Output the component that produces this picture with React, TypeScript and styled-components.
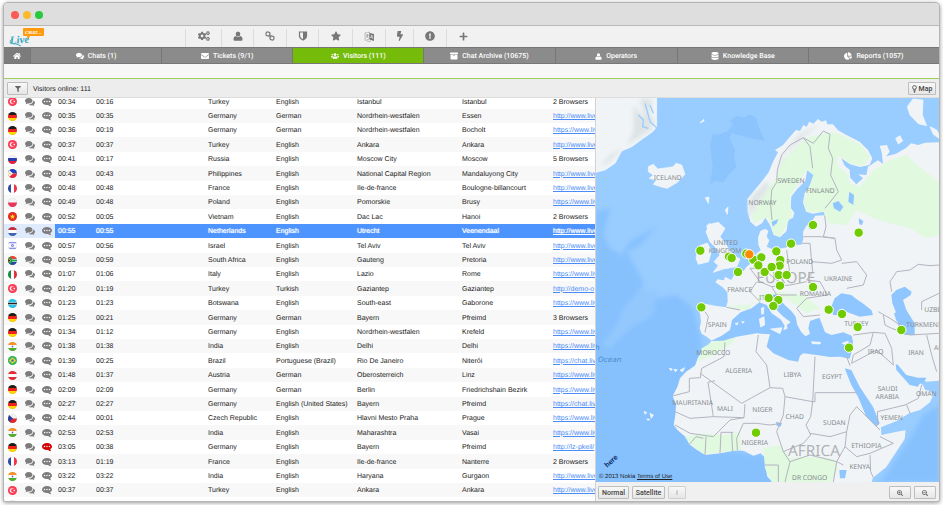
import React from "react";
import styled, { createGlobalStyle, css } from "styled-components";
import {
  FaArchive,
  FaBolt,
  FaChartPie,
  FaCogs,
  FaDatabase,
  FaEnvelope,
  FaExclamationCircle,
  FaFilter,
  FaHome,
  FaPlus,
  FaSearchMinus,
  FaSearchPlus,
  FaStar,
  FaUsers,
} from "react-icons/fa";

const GlobalStyle = createGlobalStyle`
  * { box-sizing: border-box; }
  body {
    margin: 0;
    background: #fff;
    color: #222;
    font: 7px/14px "Liberation Sans", Arial, sans-serif;
    text-rendering: geometricPrecision;
  }
  svg { display: block; flex: none; }
`;

/* ---------- window ---------- */

const Screen = styled.div`
  height: 100vh;
  padding: 3px 4px 4px;
  overflow: hidden;
`;

const Window = styled.div`
  height: 100%;
  display: flex;
  flex-direction: column;
  overflow: hidden;
  background: #f0f0f0;
  border-radius: 4px 4px 2px 2px;
  box-shadow: 0 0 0 1px #b4b4b4, 0 1px 4px 1px rgba(0, 0, 0, 0.4);
`;

const TitleBar = styled.header`
  flex: none;
  display: flex;
  align-items: center;
  gap: 4px;
  height: 23px;
  padding: 2px 7px 0;
  background: #dedede;
  border-bottom: 1px solid #b8b8b8;
`;

const WindowButton = styled.button<{ $color: string }>`
  width: 8px;
  height: 8px;
  padding: 0;
  border: 0;
  border-radius: 50%;
  background: ${(p) => p.$color};
`;

const Toolbar = styled.div`
  flex: none;
  display: flex;
  height: 21px;
  background: #f1f1f1;
`;

const LogoBox = styled.div`
  width: 181px;
  padding-left: 5px;
`;

const Tool = styled.button<{ $width: number }>`
  display: flex;
  align-items: center;
  justify-content: center;
  width: ${(p) => p.$width}px;
  height: 18px;
  margin-top: 3px;
  padding: 0 0 4px;
  border: 0;
  border-left: 1px solid #dcdcdc;
  background: none;
  color: #777;
  font-size: 10px;
`;

const Tabs = styled.nav`
  flex: none;
  display: flex;
  height: 17px;
  background: #8b8b8b;
  border-top: 1px solid #777;
  border-bottom: 1px solid #777;
`;

const Tab = styled.a<{ $grow?: number; $active?: boolean; $home?: boolean }>`
  flex: ${(p) => p.$grow ?? 131} 1 0;
  display: flex;
  align-items: center;
  justify-content: center;
  gap: 4px;
  padding-top: 1px;
  border-right: 1px solid #777;
  background: ${(p) => (p.$active ? "#74bc09" : "#8b8b8b")};
  color: #fff;
  font: 500 7px/14px Roboto, sans-serif;
  text-decoration: none;
  white-space: nowrap;
  svg {
    font-size: 8px;
  }
  &:last-child {
    border-right: 0;
  }
  ${(p) =>
    p.$home &&
    css`
      flex: 0 0 27px;
      background: #7c7c7c;
    `}
`;

const SubBar = styled.div`
  flex: none;
  height: 15px;
  background: #f7f7f7;
  border-bottom: 1px solid #9bd15a;
`;

const FilterBar = styled.div`
  flex: none;
  display: flex;
  align-items: center;
  gap: 5px;
  height: 19px;
  padding: 1px 3px 0;
  background: #ededed;
  border-bottom: 1px solid #dcdcdc;
`;

const Count = styled.span`
  flex: 1;
  padding-top: 2px;
`;

const Button = styled.button<{ $width?: number }>`
  display: flex;
  align-items: center;
  justify-content: center;
  gap: 2px;
  ${(p) => p.$width && `width: ${p.$width}px;`}
  height: 13px;
  padding: 1px 2px 0;
  border: 1px solid #bdbdbd;
  border-radius: 1px;
  background: linear-gradient(#f8f8f8, #e6e6e6);
  color: #444;
  font: 500 7px/10px Roboto, sans-serif;
  white-space: nowrap;
  &:disabled {
    border-color: #d0d0d0;
    color: #aaa;
  }
`;

/* ---------- visitor list ---------- */

const Body = styled.main`
  flex: 1;
  min-height: 0;
  display: grid;
  grid-template-columns: minmax(0, 592fr) minmax(0, 343fr);
`;

const ListPane = styled.section`
  overflow: hidden;
  background: #fff;
  border-right: 1px solid #d2d2d2;
`;

const Table = styled.table`
  width: 100%;
  margin-top: -4px;
  table-layout: fixed;
  border-collapse: collapse;
`;

const Col = styled.col<{ $width?: number }>`
  ${(p) => p.$width && `width: ${p.$width}px;`}
`;

const Cell = styled.td`
  padding: 1px 0 0 3px;
  overflow: hidden;
  white-space: nowrap;
  line-height: 13px;
`;

const IconCell = styled.td<{ $alert?: boolean }>`
  padding: 0 0 0 4px;
  color: ${(p) => (p.$alert ? "#d40000" : "#7d7d7d")};
  line-height: 0;
`;

const PageLink = styled.a`
  color: #4a8df8;
  text-decoration: underline;
`;

const Row = styled.tr<{ $selected?: boolean }>`
  height: 14px;
  &:nth-child(5n + 1),
  &:nth-child(5n + 4) {
    height: 15px;
  }
  &:nth-child(even) {
    background: #f8f8f8;
  }
  ${(p) =>
    p.$selected &&
    css`
      ${IconCell} {
        background: #dfeafc;
      }
      ${Cell} {
        background: #4d94ff;
        color: #fff;
        text-shadow: 0 0 1px #fff;
      }
      ${PageLink} {
        color: #fff;
      }
    `}
`;

/* ---------- map ---------- */

const MapPane = styled.section`
  display: flex;
  flex-direction: column;
  min-height: 0;
`;

const MapArea = styled.div`
  position: relative;
  flex: 1;
  min-height: 0;
  overflow: hidden;
  svg {
    width: 100%;
    height: 100%;
  }
`;

const Copyright = styled.small`
  position: absolute;
  left: 3px;
  bottom: 0;
  color: #222;
  font-size: 6px;
  line-height: 10px;
  a {
    color: inherit;
  }
`;

const MapBar = styled.footer`
  flex: none;
  display: flex;
  align-items: center;
  gap: 3px;
  height: 19px;
  padding: 1px 3px 0 2px;
  background: #f0f0f0;
`;

const Spacer = styled.span`
  flex: 1;
`;

/* ---------- drawings ---------- */

const Logo = () => (
  <svg width="38" height="21" viewBox="0 0 38 21" role="img" aria-label="Live Chat">
    <text x="1" y="18" fill="#3fa9bd" fontFamily="Liberation Serif, serif" fontStyle="italic" fontWeight="700" fontSize="11" transform="rotate(-4 1 18)">
      Live
    </text>
    <path d="M3 13c-3 2-2 5 0 4M4 18c3-1 5 1 8 2" fill="none" stroke="#3fa9bd" />
    <path d="M15 2h19a1 1 0 0 1 1 1v6a1 1 0 0 1-1 1H21l-2 3-1-3h-3a1 1 0 0 1-1-1V3a1 1 0 0 1 1-1z" fill="#ff9a0f" />
    <text x="16" y="8" fill="#fff" fontFamily="DejaVu Serif, serif" fontWeight="700" fontSize="4">
      CHAT...
    </text>
  </svg>
);

const UserIcon = ({ size = 10 }: { size?: number }) => (
  <svg width={size} height={size} viewBox="0 0 20 20" fill="currentColor">
    <ellipse cx="10" cy="6" rx="4.600" ry="5" />
    <path d="M5.500 10c2.500 2.600 6.500 2.600 9 0 3 .6 4.500 3 4.500 6.500 0 2-1 3-3 3H4c-2 0-3-1-3-3C1 13 2.500 10.600 5.500 10z" />
  </svg>
);

const ChatsIcon = ({ size = 10 }: { size?: number }) => (
  <svg width={size} height={size} viewBox="0 0 20 20" fill="currentColor">
    <path d="M7.500 2C11.600 2 15 4.500 15 7.500S11.600 13 7.500 13c-.8 0-1.500-.1-2.200-.2C4 13.800 2.500 14.400.8 14.600c.9-.8 1.500-1.700 1.700-2.900C1 10.600 0 9.200 0 7.500 0 4.500 3.400 2 7.500 2z" />
    <path d="M16.500 7C18.600 8 20 9.600 20 11.500c0 1.600-1 3-2.500 4 .2 1.200.8 2 1.700 2.900-1.700-.2-3.200-.8-4.500-1.800-2.800.6-5.700 0-7.500-1.600C12.500 15 16.800 11.800 16.500 7z" />
  </svg>
);

const BubbleIcon = () => (
  <svg width="10" height="10" viewBox="0 0 20 20">
    <path d="M10 2c5.500 0 10 3.100 10 7 0 2.200-1.300 4-3.500 5.300.2 1.500.7 2.800 2 4.200-2.500-.3-4.600-1.200-6.200-2.700C5.800 16.800 0 13.700 0 9c0-3.900 4.500-7 10-7z" fill="currentColor" />
    <g fill="#fff">
      <circle cx="5.200" cy="9" r="1.400" />
      <circle cx="10" cy="9" r="1.400" />
      <circle cx="14.800" cy="9" r="1.400" />
    </g>
  </svg>
);

const LinkIcon = () => (
  <svg width="10" height="10" viewBox="0 0 20 20" fill="none" stroke="currentColor" strokeWidth="2.4">
    <rect x="2" y="2" width="8" height="8" rx="3.4" transform="rotate(8 6 6)" />
    <rect x="10" y="10" width="8" height="8" rx="3.4" transform="rotate(8 14 14)" />
    <path d="M7.5 7.5l5 5" />
  </svg>
);

const ShieldIcon = () => (
  <svg width="10" height="10" viewBox="0 0 20 20">
    <path d="M3 2h14v8c0 4-4 6.500-7 8-3-1.500-7-4-7-8z" fill="none" stroke="currentColor" strokeWidth="2.400" />
    <path d="M10 2h7v8c0 4-4 6.500-7 8z" fill="currentColor" />
  </svg>
);

const TranslateIcon = () => (
  <svg width="11" height="11" viewBox="0 0 22 22">
    <path d="M2 4l9-2v14l-9 3z" fill="none" stroke="currentColor" strokeWidth="1.200" strokeDasharray="2 1" />
    <path d="M4 8h5M6.500 6v2M8 8c-.5 3-2 4.500-4 5.500M5 9.500c1 2 2 3 4 3.500" fill="none" stroke="currentColor" strokeWidth="1.100" />
    <path d="M11 4l9 2v14l-9-3z" fill="currentColor" />
    <path d="M13 14l2.500-6 2.500 7.500M14 12.500l3 .7" fill="none" stroke="#f1f1f1" strokeWidth="1.300" />
    <path d="M6 20c3 1.500 6 1 8-.5" fill="none" stroke="currentColor" />
  </svg>
);

const PinIcon = () => (
  <svg width="5" height="8" viewBox="0 0 10 16" fill="none" stroke="currentColor" strokeWidth="1.600">
    <circle cx="5" cy="5" r="3.800" />
    <path d="M3.500 9L5 15l1.500-6" />
  </svg>
);

type FlagCode =
  | "tr" | "de" | "ru" | "ph" | "fr" | "pl" | "vn" | "nl"
  | "il" | "za" | "it" | "bw" | "in" | "br" | "at" | "cz";

const Bands = ({ colors, vertical }: { colors: string[]; vertical?: boolean }) => (
  <>
    {colors.map((c, i) => {
      const size = 18 / colors.length;
      return vertical ? (
        <rect key={i} x={i * size} width={size} height="18" fill={c} />
      ) : (
        <rect key={i} y={i * size} width="18" height={size} fill={c} />
      );
    })}
  </>
);

const flagArt: Record<FlagCode, React.ReactNode> = {
  tr: (
    <>
      <rect width="18" height="18" fill="#ff3d55" />
      <circle cx="8" cy="9" r="4.500" fill="#fff" />
      <circle cx="9.500" cy="9" r="3.300" fill="#ff3d55" />
      <circle cx="12.500" cy="9" r="1.600" fill="#fff" />
    </>
  ),
  de: <Bands colors={["#1c1c1c", "#f0221c", "#ffd400"]} />,
  ru: <Bands colors={["#f4f4f4", "#2b3cae", "#e3243b"]} />,
  ph: (
    <>
      <Bands colors={["#1c3fc0", "#ea2339"]} />
      <path d="M0 0l10 9-10 9z" fill="#fff" />
      <circle cx="4" cy="9" r="2" fill="#ffce2e" />
    </>
  ),
  fr: <Bands vertical colors={["#2b4ba8", "#fff", "#f1364a"]} />,
  pl: <Bands colors={["#f4f4f4", "#e8365a"]} />,
  vn: (
    <>
      <rect width="18" height="18" fill="#ea2c20" />
      <path d="M9 4l1.500 3.500H14L11.200 10l1 3.800L9 11.600l-3.200 2.200 1-3.800L4 7.500h3.500z" fill="#ffe21f" />
    </>
  ),
  nl: <Bands colors={["#c8323f", "#fff", "#3e66b4"]} />,
  il: (
    <>
      <rect width="18" height="18" fill="#fff" />
      <path d="M0 3.500h18M0 14.500h18" stroke="#6a72e8" strokeWidth="2" />
      <path d="M9 6l2.600 4.500H6.400zM9 12L6.400 7.500h5.200z" fill="none" stroke="#6a72e8" />
    </>
  ),
  za: (
    <>
      <Bands colors={["#f04432", "#fff", "#2746a8"]} />
      <path d="M0 0l8 9-8 9M8 9h10" fill="none" stroke="#1da455" strokeWidth="4" />
      <path d="M0 4l5 5-5 5z" fill="#222" stroke="#ffc423" />
    </>
  ),
  it: <Bands vertical colors={["#1f8a46", "#fff", "#e2323b"]} />,
  bw: (
    <>
      <rect width="18" height="18" fill="#28c4f0" />
      <path d="M0 9h18" stroke="#fff" strokeWidth="5" />
      <path d="M0 9h18" stroke="#222" strokeWidth="3" />
    </>
  ),
  in: (
    <>
      <Bands colors={["#fd9226", "#fff", "#4fae2c"]} />
      <circle cx="9" cy="9" r="1.800" fill="#5a6fc0" />
    </>
  ),
  br: (
    <>
      <rect width="18" height="18" fill="#34b85a" />
      <path d="M9 3l7 6-7 6-7-6z" fill="#f8dc32" />
      <circle cx="9" cy="9" r="2.600" fill="#3f6cc0" />
    </>
  ),
  at: <Bands colors={["#e62c34", "#fff", "#e62c34"]} />,
  cz: (
    <>
      <Bands colors={["#f4f4f4", "#e1282f"]} />
      <path d="M0 0l10 9-10 9z" fill="#2c3f9c" />
    </>
  ),
};

const Flag = ({ code }: { code: FlagCode }) => (
  <svg width="9" height="9" viewBox="0 0 18 18" role="img" aria-label={code}>
    <clipPath id={`flag-${code}`}>
      <circle cx="9" cy="9" r="9" />
    </clipPath>
    <g clipPath={`url(#flag-${code})`}>{flagArt[code]}</g>
    <circle cx="9" cy="9" r="8.500" fill="none" stroke="#000" strokeOpacity=".12" />
  </svg>
);

/* ---------- map drawing ---------- */

const SEA = "#99ccff";
const LAND = "#f0f4f6";

const continent =
  "M365 737L350 725 335 716 329 700 333 680 330 655 322 640 326 627 345 626 375 632 408 637 413 620 412 592 398 577 376 562 383 553 402 556 405 545 424 555 432 540 455 535 470 515 488 500 500 475 512 466 505 450 504 428 511 408 526 401 535 408 530 425 538 436 530 455 548 463 570 461 590 457 612 449 634 449 640 432 639 410 652 388 658 403 672 404 674 393 668 376 676 362 704 361 722 349 700 350 669 356 648 350 639 322 644 295 664 265 679 240 672 228 651 227 646 258 621 283 604 305 602 338 613 353 609 368 594 376 590 408 570 427 551 420 540 390 526 368 516 385 498 395 481 380 473 350 472 312 494 285 518 256 536 232 549 200 564 172 555 165 579 150 596 130 618 105 630 108 640 90 650 95 658 80 670 86 684 72 695 80 708 76 712 88 729 88 744 106 765 118 809 140 834 165 847 190 839 210 810 216 780 208 754 190 764 212 779 224 781 248 799 268 819 250 805 238 829 240 834 215 864 196 879 207 875 172 869 152 891 150 899 170 889 184 918 176 949 158 963 145 985 150 1005 143 1047 142V857L1008 860 997 847 985 860 999 870 1005 884 1020 888 1030 900 1020 922 990 945 958 955 920 978 873 997 874 1020 920 1010 947 1006 944 1032 918 1072 889 1116 849 1148 845 1161H548L532 1145 525 1110 528 1090 512 1075 490 1082 462 1068 440 1065 392 1075 345 1080 318 1063 298 1048 286 1025 263 1006 251 990 256 960 258 930 248 903 262 876 270 850 288 830 315 812 325 785 345 762Z";

const mediterranean =
  "M362 738L395 722 420 705 426 675 452 652 485 640 508 622 530 630 545 655 573 674 584 692 580 706 592 701 591 689 602 682 577 662 555 640 545 613 541 600 560 598 582 628 606 650 617 665 622 690 634 712 647 724 660 716 655 700 660 678 688 668 697 690 705 712 725 720 760 712 785 722 789 740 785 770 779 791 750 785 720 786 680 780 640 775 630 782 624 800 595 795 550 775 530 755 535 735 540 718 500 715 440 725 400 737Z";

const forests = [
  "M494 385L484 365 520 300 560 245 575 200 610 165 645 130 705 115 730 110 765 125 812 148 840 185 820 212 780 205 745 180 740 210 775 240 780 265 810 275 850 225 900 195 950 180 980 210 1020 240 1047 260V420L1010 430 960 400 900 385 850 370 800 345 770 390 715 385 700 350 650 350 642 320 670 240 650 225 600 305 605 360 570 425 550 415 536 370 520 370Z",
  "M285 1025L340 1015 400 1020 450 1010 455 1065 390 1072 345 1078 300 1048Z",
  "M520 1060L570 1050 600 1090 640 1085 730 1090 745 1120 720 1161H545L525 1120Z",
  "M335 760L380 735 440 727 420 750 370 780 325 800Z",
  "M410 632L470 648 510 600 570 590 640 600 690 640 650 655 590 610 520 605 470 630Z",
];

const inlandWater = [
  "M729 660L724 635 734 610 754 595 784 600 799 612 818 625 844 645 849 660 809 665 769 650 744 660Z",
  "M904 600L919 585 944 575 965 590 962 600 939 615 949 645 974 685 974 720 944 720 924 690 919 655 907 625Z",
  "M764 820L784 825 809 875 849 935 869 985 859 995 829 965 804 905 784 870Z",
  "M917 807L924 810 949 840 985 848 1010 848 1003 858 988 868 984 875 959 870 944 853 919 825Z",
  "M728 325L745 318 760 335 750 350 732 340Z",
  "M778 290L792 300 790 330 775 320Z",
  "M806 370L820 378 816 390 808 388Z",
  "M545 380L565 372 560 385 548 395Z",
  "M748 1125L770 1125 765 1150 750 1150Z",
  "M558 980L575 985 572 995 560 992Z",
  "M920 680L912 655 922 650 928 670Z",
];

const islands = [
  "M18 9H200V95L188 110 160 130 125 155 95 168 75 205 45 225 18 232Z",
  "M175 215L190 208 203 222 232 218 250 215 258 205 275 210 285 238 262 262 232 280 215 276 190 268 200 256 178 250 190 240 175 230Z",
  "M360 388L385 382 405 400 390 425 402 440 415 460 432 482 450 492 440 515 400 522 370 532 385 512 372 500 390 480 375 455 360 440 348 410Z",
  "M330 452L352 444 364 468 356 500 325 508 318 490 322 465Z",
  "M969 12L999 15 997 60 1010 92 985 86 960 60 952 35Z",
  "M917 130L930 122 938 138 925 147Z",
  "M1020 95L1040 105 1047 118V130L1030 118Z",
  "M508 672L522 665 524 690 512 696Z",
  "M514 640L521 636 521 656 515 658Z",
  "M542 702L576 698 570 716Z",
  "M665 740L692 742 690 747 667 746Z",
  "M756 745L775 738 770 750Z",
  "M346 308L357 306 355 325Z",
  "M406 345L414 336 412 358Z",
  "M330 84L341 73 342 78Z",
  "M350 392L360 385 355 410Z",
  "M435 686L444 683 441 690ZM455 680L463 680 458 685Z",
  "M238 820L247 822 243 827ZM252 823L262 824 256 830ZM270 826L284 818 278 830Z",
  "M162 950L170 952 166 958ZM180 955L190 960 184 970ZM170 972L180 973 174 976Z",
];

const fjords =
  "M165 25L172 50 180 80 200 98 M145 60L160 75 158 95 175 100 M180 30L190 55";

const borders =
  "M546 375L542 330 545 285 560 262 562 225 575 180 600 150 640 128 670 145 700 108 720 118 M640 128L660 155 668 220 M720 118L715 160 728 190 722 240 745 290 705 340 M704 362L708 395 700 425 735 430 740 465 755 495 725 505 665 500 660 445 635 445 M640 425L690 425 735 430 M665 500L668 530 650 555 690 560 712 600 M755 505L800 500 830 540 820 570 770 580 M712 600L650 610 620 640 M590 465L600 540 560 555 530 530 505 520 480 520 M480 520L510 560 545 575 600 570 650 560 M500 560L480 590 510 620 M410 637L450 645 M345 650L355 665 345 712 M545 575L560 600 620 600 M620 640L640 665 690 660 M905 590L900 560 920 530 960 525 985 508 1020 512 1047 510 M995 645V620L1047 595 M865 650L900 670 930 690 M880 660L885 690 905 700 M790 720L850 712 885 715 905 760 910 810 M850 712L840 750 790 780 785 805 860 765 910 810 M905 700L960 720 1047 715 M1010 720L1025 780 1040 830 M405 742L402 785 335 820 331 848 298 850V890L248 903 M331 835L455 925 540 878 M465 927L462 968 370 965 354 862 M354 862L375 857 M540 878L530 810 498 770 505 720 M540 878L578 880 585 905 668 920 675 785 M675 893H800 M675 895V920H665 M668 920L662 965 648 990 662 1020 640 1045 580 1070 560 1010 580 960 585 905 M462 968L420 975 370 1025 300 1015 255 990 M370 965L300 970 255 950 M460 985L500 985 540 990 575 985 M460 985L440 1030 442 1065 M425 1012L428 1068 M390 1075L393 1012 430 1012 M345 1080L348 1025 M298 1048L318 1025 340 1030 M660 1015L720 1025 770 1010 780 960 800 935 870 1005 M770 1010L765 1055 800 1085 840 1075 910 1045 870 1025 M840 1080L842 1130 850 1148 M765 1055L740 1100 760 1110 M740 1100L730 1161 M580 1070L600 1100 660 1080 740 1100 M525 1110H565V1161 M600 1100L585 1161 M864 990L862 950 945 930 985 910 995 870 M950 930L960 955 M770 785L780 812";

const reliefs = [
  "M130 30L155 60 190 100 150 125 95 160 60 200 30 215 60 180 110 150 130 110Z",
  "M150 10L185 12 180 60 198 85 170 90 160 50Z",
  "M550 240L575 190 625 120 690 85 640 125 590 175Z",
  "M476 370L480 310 530 260 540 270 500 330Z",
];

const northernDeeps = [
  "M390 118L412 108 430 88 418 78 440 62 462 68 480 58 500 70 502 85 525 138 480 130 455 122 425 115 418 130 436 165 432 185 440 215 420 235 400 262 375 258 360 268 368 215 360 150 368 118Z",
];

const deepWater = [
  "M18 350L60 340 50 380 40 420 60 460 95 480 120 440 200 395 150 450 110 470 160 560 150 600 200 610 260 600 310 640 330 720 340 790 300 840 280 1000 320 1060 520 1080 600 1200 0 1200Z",
  "M540 755L600 740 680 750 760 760 740 780 640 770 600 790Z",
  "M1047 930L1000 960 960 1030 900 1120 870 1161H1047Z",
];

const shallowWater = ["M100 640L150 585 200 590 190 660 120 700 60 760 35 750 80 690Z"];

const mapLabels: [string, number, number][] = [
  ["ICELAND", 233, 247], ["SWEDEN", 603, 258], ["FINLAND", 691, 288], ["NORWAY", 517, 324],
  ["UNITED", 407, 444], ["KINGDOM", 405, 468], ["POLAND", 629, 500], ["UKRAINE", 745, 550],
  ["FRANCE", 449, 585], ["ROMANIA", 676, 596], ["ITALY", 532, 607], ["SPAIN", 382, 690],
  ["MOROCCO", 370, 772], ["ALGERIA", 446, 828], ["MAURITANIA", 308, 924], ["MALI", 405, 941],
  ["NIGER", 517, 945], ["NIGERIA", 494, 1043], ["LIBYA", 607, 839], ["EGYPT", 726, 845],
  ["CHAD", 614, 965], ["SUDAN", 733, 983], ["SAUDI", 893, 880], ["ARABIA", 892, 904],
  ["YEMEN", 905, 969], ["OMAN", 1009, 896], ["ETHIOPIA", 829, 1053], ["KENYA", 809, 1114],
  ["DR CONGO", 659, 1147], ["IRAQ", 857, 769], ["IRAN", 978, 772], ["TURKEY", 799, 686],
  ["TURKMENISTAN", 1024, 689], ["UZBEKISTAN", 1062, 645], ["AFGHANISTAN", 1100, 758],
];

const pins: [number, number][] = [
  [331, 467], [417, 485], [425, 489], [444, 531], [469, 476], [490, 494], [514, 487], [505, 511],
  [524, 531], [669, 390], [806, 413], [603, 446], [559, 469], [571, 495], [569, 512], [545, 516],
  [566, 540], [590, 540], [570, 572], [669, 576], [536, 609], [565, 615], [550, 633], [334, 637],
  [716, 644], [756, 657], [803, 696], [777, 758], [934, 705], [498, 1013],
];

const VisitorMap = () => (
  <svg viewBox="18 9 1029 1152" preserveAspectRatio="xMidYMid slice" role="img" aria-label="Visitor map">
    <defs>
      <filter id="soften" x="-20%" y="-20%" width="140%" height="140%">
        <feGaussianBlur stdDeviation="6" />
      </filter>
    </defs>
    <rect x="-500" y="-500" width="2100" height="2200" fill={SEA} />
    <g fill="#8cc5fe">
      {northernDeeps.map((d) => <path key={d} d={d} />)}
    </g>
    <g fill="#86c1fe" filter="url(#soften)">
      {deepWater.map((d) => <path key={d} d={d} />)}
    </g>
    <g fill="#93c8fd" filter="url(#soften)">
      {shallowWater.map((d) => <path key={d} d={d} />)}
    </g>
    <path d={continent} fill={LAND} />
    <g fill="#e0f9df">
      {forests.map((d) => <path key={d} d={d} />)}
    </g>
    <path d={mediterranean} fill="#8fc6ff" />
    <g fill="#8fc6ff">
      {inlandWater.map((d) => <path key={d} d={d} />)}
    </g>
    <g fill={LAND} stroke="#f8fbfc" strokeWidth="2" strokeLinejoin="round">
      {islands.map((d) => <path key={d} d={d} />)}
    </g>
    <g fill="#d9e0e2" opacity=".8" filter="url(#soften)">
      {reliefs.map((d) => <path key={d} d={d} />)}
    </g>
    <path d={fjords} fill="none" stroke={SEA} strokeWidth="4" />
    <path d={borders} fill="none" stroke="#b4b4c0" strokeWidth="3" strokeLinejoin="round" />
    <g fill="#a3a6aa" fillOpacity=".85" fontFamily="Noto Sans, sans-serif" fontSize="46" textAnchor="middle">
      <text x="587" y="565">EUROPE</text>
      <text x="672" y="1082">AFRICA</text>
    </g>
    <g fill="#868a90" fontFamily="Noto Sans, sans-serif" fontSize="20" textAnchor="middle">
      {mapLabels.map(([name, x, y]) => (
        <text key={name} x={x} y={y + 7}>{name}</text>
      ))}
    </g>
    <g fill="#4a8acb" fontFamily="DejaVu Sans, sans-serif" fontStyle="italic" fontSize="22" textAnchor="end">
      <text x="29" y="764">North</text>
      <text x="94" y="800">Ocean</text>
    </g>
    <g fill="#70cb00" stroke="#fff" strokeWidth="3">
      {pins.map(([x, y]) => <circle key={`${x}-${y}`} cx={x} cy={y} r="14" />)}
      <circle cx="478" cy="478" r="14" fill="#ff8a00" />
    </g>
    <text x="52" y="1118" fill="#10306e" fontFamily="Lato, sans-serif" fontWeight="900" fontSize="22" transform="rotate(-42 52 1118)">
      here
    </text>
  </svg>
);

/* ---------- data ---------- */

const W = "http://www.live";
const S = "https://www.liv";
const C = "https://chat.live";

type Visitor = [FlagCode, string, string, string, string, string, string, string];

const visitors: Visitor[] = [
  ["tr", "00:34", "00:16", "Turkey", "English", "Istanbul", "Istanbul", "2 Browsers"],
  ["de", "00:35", "00:35", "Germany", "German", "Nordrhein-westfalen", "Essen", W],
  ["de", "00:36", "00:19", "Germany", "German", "Nordrhein-westfalen", "Bocholt", S],
  ["tr", "00:37", "00:37", "Turkey", "English", "Ankara", "Ankara", W],
  ["ru", "00:41", "00:17", "Russia", "English", "Moscow City", "Moscow", "5 Browsers"],
  ["ph", "00:43", "00:43", "Philippines", "English", "National Capital Region", "Mandaluyong City", W],
  ["fr", "00:48", "00:48", "France", "English", "Ile-de-france", "Boulogne-billancourt", W],
  ["pl", "00:49", "00:48", "Poland", "English", "Pomorskie", "Brusy", S],
  ["vn", "00:52", "00:05", "Vietnam", "English", "Dac Lac", "Hanoi", "2 Browsers"],
  ["nl", "00:55", "00:55", "Netherlands", "English", "Utrecht", "Veenendaal", W],
  ["il", "00:57", "00:56", "Israel", "English", "Tel Aviv", "Tel Aviv", W],
  ["za", "00:59", "00:59", "South Africa", "English", "Gauteng", "Pretoria", W],
  ["it", "01:07", "01:06", "Italy", "English", "Lazio", "Rome", S],
  ["tr", "01:20", "01:19", "Turkey", "Turkish", "Gaziantep", "Gaziantep", "http://demo-o"],
  ["bw", "01:23", "01:23", "Botswana", "English", "South-east", "Gaborone", S],
  ["de", "01:25", "00:21", "Germany", "German", "Bayern", "Pfreimd", "3 Browsers"],
  ["de", "01:34", "01:12", "Germany", "English", "Nordrhein-westfalen", "Krefeld", S],
  ["in", "01:38", "01:38", "India", "English", "Delhi", "Delhi", S],
  ["br", "01:39", "00:25", "Brazil", "Portuguese (Brazil)", "Rio De Janeiro", "Niterói", C],
  ["at", "01:48", "01:37", "Austria", "German", "Oberosterreich", "Linz", S],
  ["de", "02:09", "02:09", "Germany", "German", "Berlin", "Friedrichshain Bezirk", S],
  ["de", "02:27", "02:27", "Germany", "English (United States)", "Bayern", "Pfreimd", C],
  ["cz", "02:44", "00:01", "Czech Republic", "English", "Hlavni Mesto Praha", "Prague", S],
  ["in", "02:53", "02:53", "India", "English", "Maharashtra", "Vasai", S],
  ["de", "03:05", "00:38", "Germany", "English", "Bayern", "Pfreimd", "http://lz-pkeil/"],
  ["fr", "03:13", "01:19", "France", "English", "Ile-de-france", "Nanterre", "2 Browsers"],
  ["in", "03:22", "03:22", "India", "English", "Haryana", "Gurgaon", W],
  ["tr", "00:37", "00:37", "Turkey", "English", "Ankara", "Ankara", W],
  ["pl", "", "", "", "", "", "", ""],
];

const tools: [string, number, React.ReactNode][] = [
  ["Settings", 36, <FaCogs size={12} />],
  ["Profile", 32, <UserIcon />],
  ["Links", 33, <LinkIcon />],
  ["Security", 32, <ShieldIcon />],
  ["Favorites", 34, <FaStar />],
  ["Translate", 33, <TranslateIcon />],
  ["Events", 28, <FaBolt />],
  ["Alerts", 33, <FaExclamationCircle />],
  ["Add", 33, <FaPlus size={9} />],
];

const tabs: [string, number, React.ReactNode][] = [
  ["Chats (1)", 131, <ChatsIcon size={8} />],
  ["Tickets (9/1)", 131, <FaEnvelope />],
  ["Visitors (111)", 131, <FaUsers />],
  ["Chat Archive (10675)", 131, <FaArchive />],
  ["Operators", 122, <UserIcon size={7} />],
  ["Knowledge Base", 131, <FaDatabase />],
  ["Reports (1057)", 131, <FaChartPie />],
];

const columns = [17, 17, 17, 38, 112, 68, 81, 105, 91];

const VisitorRow = ({ visitor, index }: { visitor: Visitor; index: number }) => {
  const [flag, ...texts] = visitor;
  const page = texts[6];
  return (
    <Row $selected={index === 9}>
      <IconCell><Flag code={flag} /></IconCell>
      <IconCell><ChatsIcon /></IconCell>
      <IconCell $alert={index === 24}><BubbleIcon /></IconCell>
      {texts.slice(0, 6).map((text, i) => <Cell key={i}>{text}</Cell>)}
      <Cell>{page.startsWith("http") ? <PageLink href="#page">{page}</PageLink> : page}</Cell>
    </Row>
  );
};

export default function App() {
  return (
    <Screen>
      <GlobalStyle />
      <Window>
        <TitleBar>
          <WindowButton $color="#fc5b57" aria-label="Close" />
          <WindowButton $color="#fdba2e" aria-label="Minimize" />
          <WindowButton $color="#27c93f" aria-label="Maximize" />
        </TitleBar>
        <Toolbar>
          <LogoBox><Logo /></LogoBox>
          {tools.map(([name, width, icon]) => (
            <Tool key={name} $width={width} aria-label={name}>{icon}</Tool>
          ))}
        </Toolbar>
        <Tabs>
          <Tab href="#home" $home aria-label="Home"><FaHome /></Tab>
          {tabs.map(([name, grow, icon], i) => (
            <Tab key={name} href={`#tab-${i}`} $grow={grow} $active={i === 2}>
              {icon}
              {name}
            </Tab>
          ))}
        </Tabs>
        <SubBar />
        <FilterBar>
          <Button $width={21} aria-label="Filter"><FaFilter size={6} color="#666" /></Button>
          <Count>Visitors online: 111</Count>
          <Button $width={28}><PinIcon />Map</Button>
        </FilterBar>
        <Body>
          <ListPane>
            <Table>
              <colgroup>
                {columns.map((width, i) => <Col key={i} $width={width} />)}
                <Col />
              </colgroup>
              <tbody>
                {visitors.map((visitor, i) => <VisitorRow key={i} visitor={visitor} index={i} />)}
              </tbody>
            </Table>
          </ListPane>
          <MapPane>
            <MapArea>
              <VisitorMap />
              <Copyright>© 2013 Nokia <a href="#terms">Terms of Use</a></Copyright>
            </MapArea>
            <MapBar>
              <Button $width={31}>Normal</Button>
              <Button $width={33}>Satellite</Button>
              <Button $width={18} disabled>i</Button>
              <Spacer />
              <Button $width={22} aria-label="Zoom in"><FaSearchPlus size={6} color="#666" /></Button>
              <Button $width={22} aria-label="Zoom out"><FaSearchMinus size={6} color="#666" /></Button>
            </MapBar>
          </MapPane>
        </Body>
      </Window>
    </Screen>
  );
}
